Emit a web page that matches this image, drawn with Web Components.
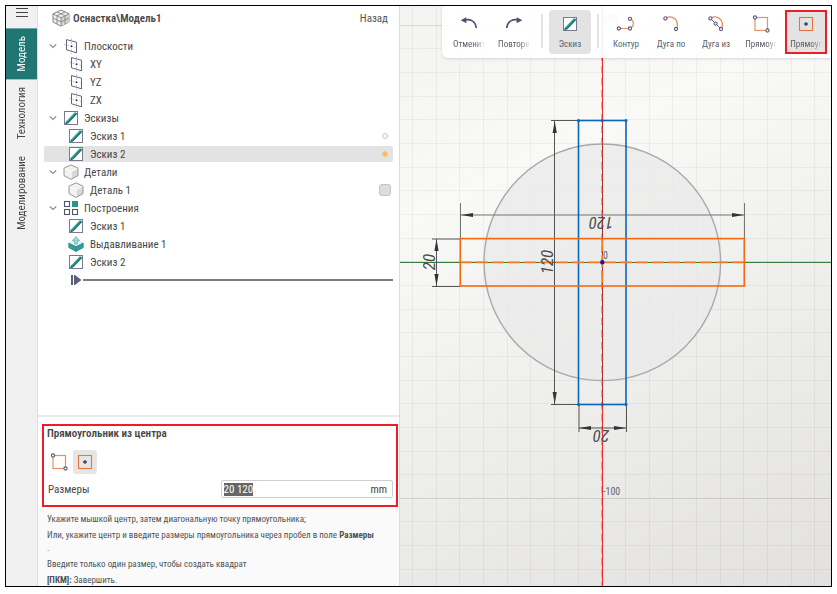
<!DOCTYPE html>
<html lang="ru">
<head>
<meta charset="utf-8">
<title>Оснастка\Модель1</title>
<style>
body{margin:0;background:#fff;font-family:"Roboto Condensed","Liberation Sans",sans-serif;font-size:11px;color:#474747}
</style>
</head>
<body>
<cad-app></cad-app>
<script>
const define=(name,html,init)=>{
  const t=document.createElement('template');
  t.innerHTML=html;
  customElements.define(name,class extends HTMLElement{
    constructor(){super();this.attachShadow({mode:'open'}).append(t.content.cloneNode(true));}
    connectedCallback(){if(init&&!this.ready){this.ready=true;init(this,this.shadowRoot);}}
  });
};

/* Icons: [viewBox size, markup] */
const pencil='<path d="M2.2 14.4 3 11.4 12 2 14.2 3.8 5.2 13.2Z" fill="#35a39e"/><path d="M4.2 12.4 13.2 2.9 14.2 3.8 5.2 13.2Z" fill="#176e6c"/><path d="M2.2 14.4 3 11.4 5.2 13.2Z" fill="#2c6f78"/>';
const node=(x,y)=>`<circle cx="${x}" cy="${y}" r="1.6" fill="#fff" stroke="#56597a" stroke-width="1.1"/>`;
const ICONS={
 menu:[14,'<path d="M1 2.5h12M1 6.5h12M1 10.5h12" stroke="#444" stroke-width="1.2"/>'],
 chevron:[10,'<path d="M1.8 3.5 5 6.5 8.2 3.5" fill="none" stroke="#8b8b8b" stroke-width="1.1"/>'],
 plane:[16,'<path d="M3.5 1.6 13.5 4.2V14.8L3.5 11.8Z" fill="#fff" stroke="#50536b" stroke-width=".9"/><path d="M8.5 .4V15.8M1 6.4 15.5 10" stroke="#9b9db0" stroke-width=".6" stroke-dasharray="2 1.6" fill="none"/><circle cx="8.5" cy="8.2" r=".9" fill="#30334f"/>'],
 sketch:[16,'<rect x="1.5" y="1.5" width="13" height="13" fill="#fff" stroke="#777a90"/>'+pencil],
 part:[16,'<path d="M8 .8 15 4.2V11.6L8 15.4 1 11.6V4.2Z" fill="#f1f1f0"/><path d="M8 7.6 15 4.2V11.6L8 15.4Z" fill="#d9d9d7"/><path d="M8 7.6V15M8 7.6 1.4 4.4M8 7.6l6.6-3.2" stroke="#fff" fill="none"/><path d="M8 .8 15 4.2V11.6L8 15.4 1 11.6V4.2Z" fill="none" stroke="#8d8d8d" stroke-width=".9"/>'],
 build:[16,'<g fill="#fff" stroke="#50536b" stroke-width="1.1"><rect x="1.5" y="1.5" width="5" height="5"/><rect x="1.5" y="9.5" width="5" height="5"/><rect x="9.5" y="9.5" width="5" height="5"/></g><rect x="9" y="1" width="6" height="6" fill="#2a9490"/>'],
 extrude:[16,'<path d="M.8 7.2 8 4.2 15.2 7.2V11.6L8 15.4.8 11.6Z" fill="#2fa19c"/><path d="M.8 7.2 8 10.6 15.2 7.2 8 4.2Z" fill="#e8f7f6"/><path d="M.8 7.2 8 10.6 15.2 7.2M8 10.6v4.8M.8 7.2V11.6L8 15.4 15.2 11.6V7.2" fill="none" stroke="#2b7f80" stroke-width=".8"/><path d="M8 .6 11.6 4.6H9.4V8H6.6V4.6H4.4Z" fill="#9fdcd8" stroke="#4c9c9f" stroke-width=".6"/>'],
 root:[18,'<path d="M9 1 17 4.8V13L9 17.2 1 13V4.8Z" fill="#f0f0ee" stroke="#777" stroke-width=".9"/><path d="M9 8.8 17 4.8V13L9 17.2Z" fill="#d4d4d2"/><path d="M1 4.8 9 8.8 17 4.8M9 8.8V17M5 2.9 13 6.8V15M13 2.9 5 6.8V15M1 9 9 13 17 9" fill="none" stroke="#868686" stroke-width=".9"/>'],
 step:[12,'<path d="M1 1h2v10H1ZM4 1h1L11.4 6 5 11H4Z" fill="#5b5f79"/>'],
 undo:[18,'<path d="M4 5.2C10 3.6 15.6 6 16.2 13" fill="none" stroke="#4d5070" stroke-width="1.7"/><path d="M.6 5.2 6.4 2.2V8.2Z" fill="#4d5070"/>'],
 redo:[18,'<path d="M14 5.2C8 3.6 2.4 6 1.8 13" fill="none" stroke="#4d5070" stroke-width="1.7"/><path d="M17.4 5.2 11.6 2.2V8.2Z" fill="#4d5070"/>'],
 contour:[20,'<path d="M3 14.5H13.5M14 4.5C18.4 6.5 18.4 12.4 14 14.5" fill="none" stroke="#e9895c" stroke-width="1.2"/>'+node(2.8,14.5)+node(14,14.5)+node(14,4.8)],
 arc3:[20,'<path d="M5 4C11 .6 18.8 6 15.6 14.6" fill="none" stroke="#e9895c" stroke-width="1.2"/>'+node(4.4,4.4)+node(15,15)],
 arcc:[20,'<path d="M5 4C11 .6 18.8 6 15.6 14.6" fill="none" stroke="#e9895c" stroke-width="1.2"/><path d="M4.4 4.4 15 15" stroke="#56597a" stroke-width=".9"/>'+node(4.4,4.4)+node(9.6,9.6)+node(15,15)],
 rect:[20,'<rect x="4" y="3.5" width="12.5" height="13" fill="none" stroke="#ea8f66" stroke-width="1.2"/>'+node(4,3.5)+node(16.5,16.5)],
 rectc:[20,'<rect x="3.5" y="3.5" width="13" height="13" fill="none" stroke="#e8763f" stroke-width="1.1"/><path d="M10 8V12M8 10H12" stroke="#3c3f60" stroke-width="1.3"/>']
};
define('cad-icon','<style>:host{display:block;flex:none}svg{display:block}</style>',(el,r)=>{
  const [box,body]=ICONS[el.getAttribute('name')];
  r.innerHTML+=`<svg width="${box}" height="${box}" viewBox="0 0 ${box} ${box}" aria-hidden="true">${body}</svg>`;
});

/* Left vertical tabs */
define('side-rail',`<style>
:host{display:flex;flex-direction:column;background:#f1f1f1;border-right:1px solid #dedede}
button{border:0;padding:0;background:none;color:#444;font:inherit;display:flex;align-items:center;justify-content:center}
.menu{height:14px;margin-bottom:8px}
.tab{writing-mode:vertical-rl;transform:rotate(180deg);padding:8px 0}
.tab[aria-selected=true]{background:#207673;color:#fff}
nav{display:flex;flex-direction:column}
</style>
<button class="menu" aria-label="Меню"><cad-icon name="menu"></cad-icon></button>
<nav role="tablist"><button class="tab" role="tab" aria-selected="true">Модель</button><button class="tab" role="tab">Технология</button><button class="tab" role="tab">Моделирование</button></nav>`);

/* Tree row: icon, level, label slot and trailing control slot */
define('tree-row',`<style>
:host{display:flex;align-items:center;height:16px;padding:0 5px 0 4px;border-radius:2px}
:host([selected]){background:#e3e3e3}
button{width:10px;height:10px;padding:0;border:0;background:none;margin-right:5px}
.pad{width:20px}
.label{flex:1;margin-left:5px}
:host(:not([group])) .label{margin-left:6px}
</style><span class="label"><slot></slot></span><slot name="end"></slot>`,(el,r)=>{
  const lead=document.createElement(el.hasAttribute('group')?'button':'span');
  if(lead.tagName==='BUTTON'){lead.setAttribute('aria-label','Свернуть');lead.innerHTML='<cad-icon name="chevron"></cad-icon>';}
  else lead.className='pad';
  const ic=document.createElement('cad-icon');
  ic.setAttribute('name',el.getAttribute('icon'));
  r.querySelector('.label').before(lead,ic);
});

define('model-tree',`<style>
:host{display:block;padding:0 6px}
header{display:flex;align-items:center;height:24px;padding:0 5px 0 8px;margin-bottom:8px}
h1{font-size:11px;font-weight:600;margin:0 0 0 3px;flex:1}
header a{color:#555;text-decoration:none}
.rows{display:flex;flex-direction:column;gap:2px}
input{appearance:none;margin:0;flex:none;background:#fff;border:1px solid #c4c4c4}
input[type=radio]{width:6px;height:6px;border-radius:50%}
input[type=radio]:checked{background:#f5bd5c;border-color:#f1c77d}
input[type=checkbox]{width:12px;height:12px;border-radius:3px;background:#dcdcdc;margin-right:-3px}
.end{display:flex;align-items:center;padding-left:26px;height:16px}
.end i{flex:1;height:2px;background:#7b7b7b;margin-left:1px}
</style>
<header><cad-icon name="root"></cad-icon><h1>Оснастка\\Модель1</h1><a href="#">Назад</a></header>
<div class="rows">
<tree-row group icon="plane">Плоскости</tree-row>
<tree-row icon="plane">XY</tree-row>
<tree-row icon="plane">YZ</tree-row>
<tree-row icon="plane">ZX</tree-row>
<tree-row group icon="sketch">Эскизы</tree-row>
<tree-row icon="sketch">Эскиз 1<input slot="end" type="radio" name="sk" aria-label="Эскиз 1"></tree-row>
<tree-row selected icon="sketch">Эскиз 2<input slot="end" type="radio" name="sk" checked aria-label="Эскиз 2"></tree-row>
<tree-row group icon="part">Детали</tree-row>
<tree-row icon="part">Деталь 1<input slot="end" type="checkbox" aria-label="Деталь 1"></tree-row>
<tree-row group icon="build">Построения</tree-row>
<tree-row icon="sketch">Эскиз 1</tree-row>
<tree-row icon="extrude">Выдавливание 1</tree-row>
<tree-row icon="sketch">Эскиз 2</tree-row>
<div class="end"><cad-icon name="step"></cad-icon><i></i></div>
</div>`);

/* Parameters of the active command */
define('command-form',`<style>
:host{display:block;border:2px solid #ee1c25;padding:1px 2px 7px}
h2{font-size:11px;font-weight:600;margin:0 0 10px 1px;line-height:13px}
.modes{display:flex;gap:2px;margin-bottom:6px}
.modes button{width:24px;height:24px;border:0;border-radius:3px;background:none;padding:2px;margin-left:1px}
.modes button+button{margin-left:0;background:#e6e6e6}
.row{display:flex;align-items:center;padding:0 1px 0 2px}
label{flex:1}
.field{flex:none;width:50%;display:flex;align-items:center;box-sizing:border-box;height:18px;border:1px solid #cfcfcf;border-radius:2px;padding:0 5px 0 2px;background:#fff}
input{flex:1;min-width:0;border:0;outline:0;padding:0;background:none;font:inherit;color:inherit;height:14px}
input::selection{background:#666;color:#fff}
</style>
<h2>Прямоугольник из центра</h2>
<div class="modes"><button aria-label="Прямоугольник"><cad-icon name="rect"></cad-icon></button><button aria-label="Прямоугольник из центра" aria-pressed="true"><cad-icon name="rectc"></cad-icon></button></div>
<div class="row"><label for="size">Размеры</label><div class="field"><input id="size" value="20 120"><span>mm</span></div></div>`,
(el,r)=>{const i=r.getElementById('size');i.focus();i.select();});

define('command-hints',`<style>
:host{display:block;background:#fafafa;font-size:9px;line-height:13px;color:#4d5358;padding:6px 8px 0 9px}
p{margin:0 0 3px}
</style>
<p>Укажите мышкой центр, затем диагональную точку прямоугольника;</p>
<p>Или, укажите центр и введите размеры прямоугольника через пробел в поле <b>Размеры</b><br>.</p>
<p>Введите только один размер, чтобы создать квадрат</p>
<p><b>[ПКМ]:</b> Завершить.</p>`);

/* Toolbar */
define('tool-button',`<style>
:host{display:block;width:42px}
button{box-sizing:border-box;width:100%;height:44px;border:0;border-radius:4px;background:none;padding:0 5px;display:flex;flex-direction:column;align-items:center;justify-content:center;gap:4px;font:inherit;font-size:9px;line-height:12px;color:#5b5e6c}
:host([active]) button{background:#e3e3e3}
:host([marked]) button{border:2px solid #ee1c25;border-radius:0;padding:0 3px}
.icon{height:20px;display:grid;place-items:center}
.text{max-width:100%;overflow:hidden;white-space:nowrap}
:host([fade]) .text{-webkit-mask-image:linear-gradient(90deg,#000 70%,transparent);mask-image:linear-gradient(90deg,#000 70%,transparent)}
</style><button><span class="icon"></span><span class="text"><slot></slot></span></button>`,(el,r)=>{
  r.querySelector('.icon').innerHTML=`<cad-icon name="${el.getAttribute('icon')}"></cad-icon>`;
});
define('tool-bar',`<style>
:host{display:flex;align-items:flex-start;gap:3px;padding:4px 4px 4px 6px;background:rgba(255,255,255,.92);border-radius:4px 0 0 6px;box-shadow:0 1px 3px rgba(0,0,0,.14)}
i{width:2px;height:34px;margin:4px 3px 0;background:#e2e2e2}
</style>
<tool-button icon="undo" fade>Отменит</tool-button><tool-button icon="redo" fade>Повтори</tool-button><i></i>
<tool-button icon="sketch" active>Эскиз</tool-button><i></i>
<tool-button icon="contour">Контур</tool-button><tool-button icon="arc3">Дуга по</tool-button><tool-button icon="arcc">Дуга из</tool-button><tool-button icon="rect" fade>Прямоуг</tool-button><tool-button icon="rectc" active marked fade>Прямоуг</tool-button>`);

/* Drawing area: 10 mm per grid cell */
define('sketch-view',`<style>
:host{display:block;position:relative;overflow:hidden;border-left:1px solid #dcdcdc;background:linear-gradient(155deg,#f3f3f2 0,#f9f9f8 28%,#eeeeed 60%,#e2e1e0 100%)}
svg{position:absolute;inset:0;width:100%;height:100%}
tool-bar{position:absolute;top:0;right:0}
.lbl{font-size:10px;fill:#666}
.dim{font-size:17px;font-style:italic;fill:#4c4c4c;text-anchor:middle}
</style>
<svg viewBox="0 0 431 580" preserveAspectRatio="xMidYMid slice" role="img" aria-label="Эскиз 2"></svg><tool-bar></tool-bar>`,(el,r)=>{
  const cx=202.3,cy=256.3,p=23.65;
  let g='';
  for(let k=-9;k<=10;k++){const x=Math.round(cx+k*p)-.5;g+=`<path d="M${x} 0V580"/>`;}
  for(let k=-11;k<=14;k++){const y=Math.round(cy+k*p)-.5;g+=`<path d="M0 ${y}H431"${k%10===0?' stroke-opacity=".12"':''}/>`;}
  const arrow=(x,y,a)=>`<path d="M0 0 12-2.1V2.1Z" transform="translate(${x} ${y}) rotate(${a})"/>`;
  r.querySelector('svg').innerHTML=`
  <g stroke="#000" stroke-opacity=".045" fill="none">${g}</g>
  <circle cx="${cx}" cy="${cy}" r="118.3" fill="#e9e9ea" fill-opacity=".75" stroke="#a9a9a9" stroke-width="1.4"/>
  <path d="M0 256.5H431" stroke="#238a2b"/><path d="M0 256.5H431" stroke="#5a6a5a" stroke-dasharray="7 5" stroke-width=".6"/>
  <path d="M202.500 0V580" stroke="#ee2c28"/><path d="M201.500 0V580" stroke="#b9b0b0" stroke-dasharray="7 5"/>
  <path d="M202.500 114V399" stroke="#8a3030" stroke-dasharray="9 3" stroke-opacity=".7"/>
  <g stroke="#555" fill="none"><path d="M60.5 197V232M344.5 197V232M60.5 209H344.5" stroke="#757575"/>
  <path d="M151 114.5H178M151 398.5H178M154.5 114V399"/><path d="M32 233H60M32 280.5H60M36.5 233V280"/><path d="M179 399V426M226.5 399V426M179 422H226"/></g>
  <g fill="#333">${arrow(61,209,0)}${arrow(344,209,180)}${arrow(154.7,115,90)}${arrow(154.7,398,-90)}${arrow(36.5,233,90)}${arrow(36.5,280,-90)}${arrow(179,422,0)}${arrow(226,422,180)}</g>
  <rect x="178.5" y="114.5" width="47.5" height="284" fill="none" stroke="#0a66bd" stroke-width="1.6"/>
  <g fill="#0a66bd"><circle cx="178.5" cy="114.5" r="1.5"/><circle cx="202.3" cy="114.5" r="1.5"/><circle cx="226" cy="114.5" r="1.5"/><circle cx="178.5" cy="398.5" r="1.5"/><circle cx="202.3" cy="398.5" r="1.5"/><circle cx="226" cy="398.5" r="1.5"/></g>
  <rect x="60.3" y="232.6" width="284" height="47.4" fill="none" stroke="#f26a12" stroke-width="1.6"/>
  <path d="M60 256.3H344" stroke="#f47a1d" stroke-width="1.8" stroke-dasharray="12 4"/><path d="M202.3 233V280" stroke="#f47a1d" stroke-width="1.8" stroke-dasharray="12 4"/>
  <circle cx="202.3" cy="256.3" r="2.2" fill="#24108c"/>
  <text class="dim" transform="translate(201 211) rotate(180)">120</text>
  <text class="dim" transform="translate(153 256) rotate(-90)">120</text>
  <text class="dim" transform="translate(35 256) rotate(-90)">20</text>
  <text class="dim" transform="translate(201 424) rotate(180)">20</text>
  <text class="lbl" x="203" y="253">0</text><text class="lbl" x="203" y="489">-100</text><text class="lbl" x="203" y="16" fill-opacity=".6">100</text>`;
});

define('cad-app',`<style>
:host{display:block;box-sizing:border-box;height:100vh;padding:5px 5px 7px}
main{box-sizing:border-box;height:100%;border:1px solid #000;display:grid;grid-template-columns:32px minmax(260px,361px) minmax(50%,1fr);overflow:hidden}
.panel{display:flex;flex-direction:column;min-height:0;overflow:hidden;background:#fff}
model-tree{flex:1;min-height:0;border-bottom:2px solid #e9e9e9}
command-form{margin:7px 1px 0 4px}
command-hints{height:73px}
</style>
<main><side-rail></side-rail>
<div class="panel"><model-tree></model-tree><command-form></command-form><command-hints></command-hints></div>
<sketch-view></sketch-view></main>`);
</script>
</body>
</html>
